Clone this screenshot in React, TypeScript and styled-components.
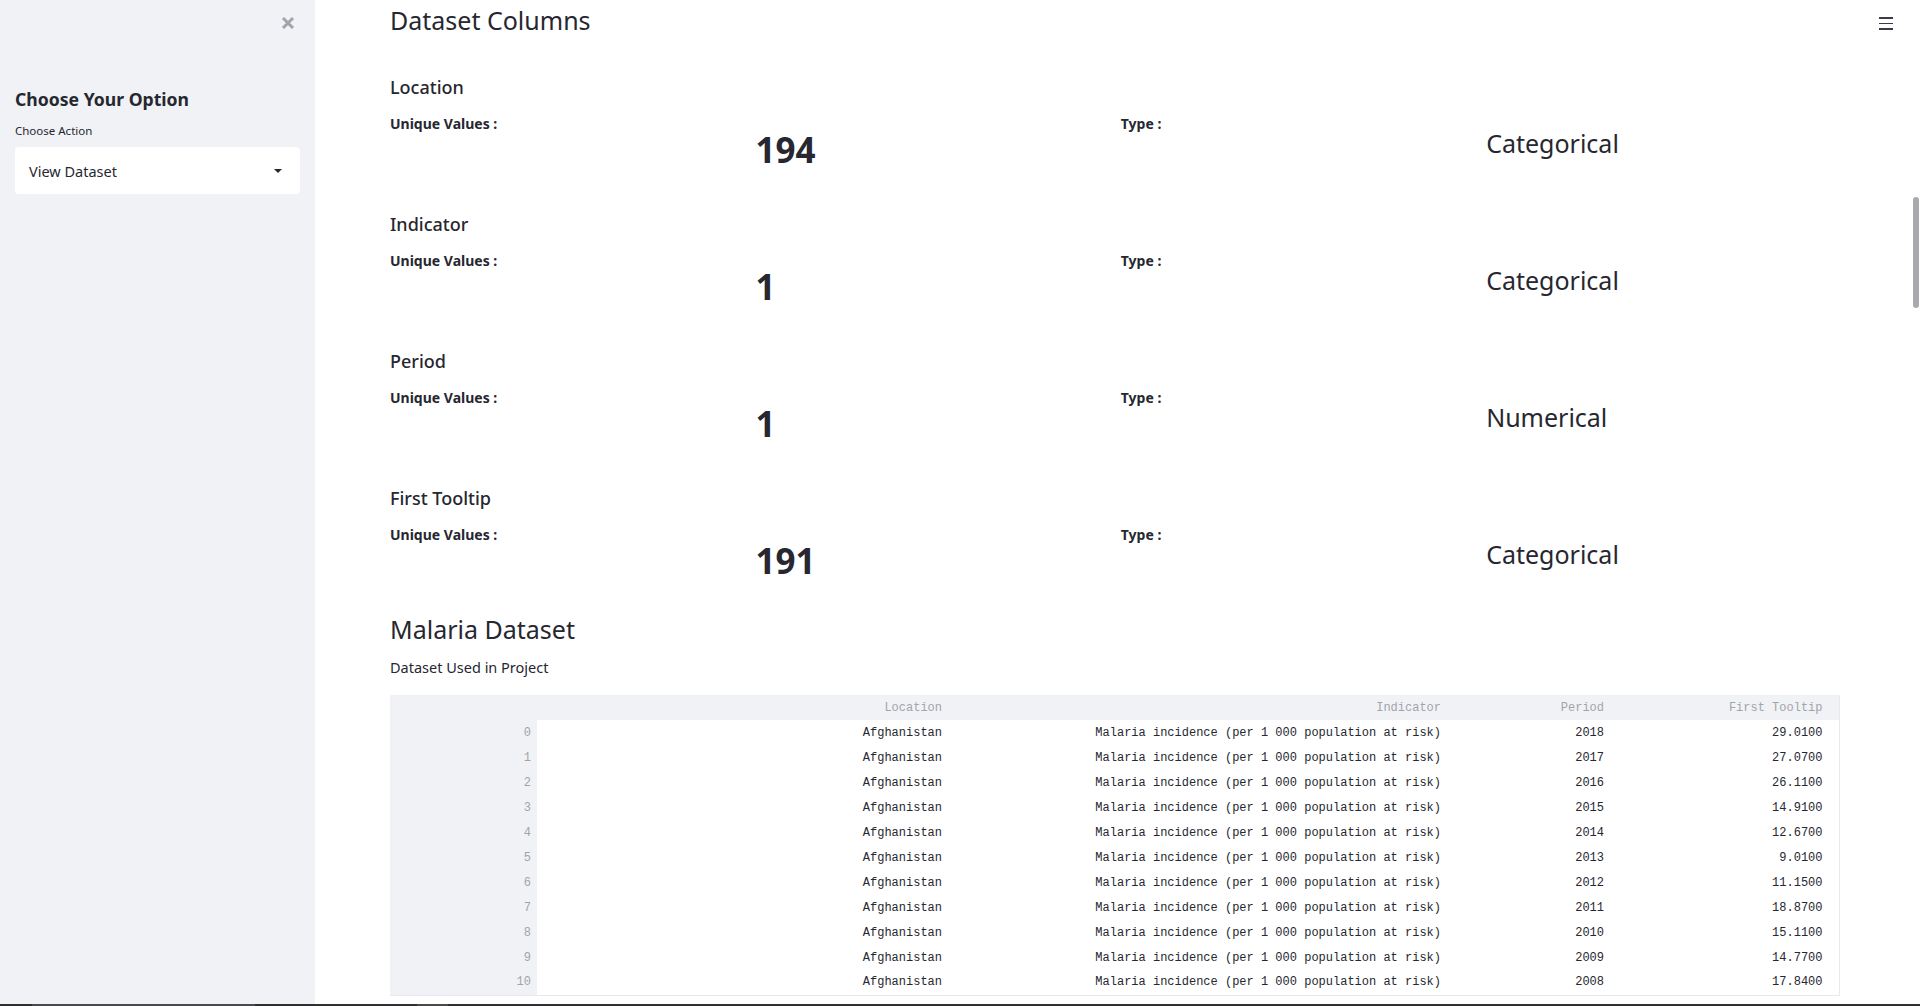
import React from "react";
import styled, { createGlobalStyle } from "styled-components";

const GlobalStyle = createGlobalStyle`
  html, body { margin: 0; padding: 0; background: #ffffff; }
  body { font-family: "Noto Sans", "Open Sans", sans-serif; color: #262730; overflow: hidden; }
  * { box-sizing: border-box; }
`;

const Shell = styled.div`
  display: flex;
  flex-direction: column;
  width: 1920px;
  height: 1006px;
  overflow: hidden;
`;

const Body = styled.div`
  display: flex;
  flex: 1;
  min-height: 0;
  position: relative;
`;

const Sidebar = styled.aside`
  width: 315px;
  flex-shrink: 0;
  background: #f0f2f6;
  display: flex;
  flex-direction: column;
  padding: 0 15px;
`;

const CloseRow = styled.div`
  display: flex;
  justify-content: flex-end;
  padding: 16px 5px 0 0;
  height: 87px;
`;

const SideTitle = styled.h2`
  margin: 0;
  font-size: 17.6px;
  font-weight: 700;
  line-height: 24px;
`;

const FieldLabel = styled.label`
  display: block;
  margin-top: 13px;
  font-size: 11.5px;
  line-height: 14px;
  color: #262730;
`;

const SelectBox = styled.div`
  margin-top: 9px;
  height: 47px;
  background: #ffffff;
  border-radius: 4px;
  display: flex;
  align-items: center;
  justify-content: space-between;
  padding: 0 18px 0 14px;
  font-size: 14.5px;
  color: #262730;
`;

const Caret = styled.span`
  width: 0;
  height: 0;
  border-left: 4px solid transparent;
  border-right: 4px solid transparent;
  border-top: 4px solid #262730;
`;

const Main = styled.main`
  flex: 1;
  padding: 0 81px 0 75px;
  display: flex;
  flex-direction: column;
`;

const PageTitle = styled.h2`
  margin: 2px 0 0 0;
  font-size: 25px;
  font-weight: 400;
  line-height: 36px;
`;

const Blocks = styled.div`
  margin-top: 37px;
  display: flex;
  flex-direction: column;
  gap: 41px;
`;

const Block = styled.section`
  display: flex;
  flex-direction: column;
`;

const ColName = styled.h3`
  margin: 0;
  font-size: 18px;
  font-weight: 500;
  line-height: 24px;
`;

const StatGrid = styled.div`
  margin-top: 15px;
  display: grid;
  grid-template-columns: repeat(4, 1fr);
  column-gap: 12px;
  height: 57px;
`;

const StatLabel = styled.div`
  font-size: 14px;
  font-weight: 700;
  line-height: 20px;
`;

const BigNumber = styled.div`
  padding-top: 14px;
  font-size: 35px;
  font-weight: 700;
  line-height: 44px;
`;

const TypeValue = styled.div`
  padding-top: 11px;
  font-size: 25px;
  font-weight: 400;
  line-height: 36px;
`;

const SectionTitle = styled.h2`
  margin: 29px 0 0 0;
  font-size: 25px;
  font-weight: 400;
  line-height: 36px;
`;

const Caption = styled.p`
  margin: 10px 0 0 0;
  font-size: 14.5px;
  line-height: 20px;
`;

const Table = styled.table`
  margin-top: 18px;
  width: 1449px;
  border-collapse: collapse;
  table-layout: fixed;
  font-family: "Liberation Mono", "DejaVu Sans Mono", monospace;
  font-size: 12px;
  border-bottom: 1px solid #e6e9ef;
  border-right: 1px solid #e6e9ef;
`;

const Col = styled.col<{ $w: number }>`
  width: ${(p) => p.$w}px;
`;

const HeadCell = styled.th<{ $last?: boolean }>`
  height: 25px;
  padding: 0 ${(p) => (p.$last ? "16px" : "6px")} 0 0;
  text-align: right;
  font-weight: 400;
  color: #a3a4aa;
  background: #f0f2f6;
  white-space: nowrap;
`;

const IndexCell = styled.th`
  height: 25px;
  padding: 0 6px 0 0;
  text-align: right;
  font-weight: 400;
  color: #a3a4aa;
  background: #f0f2f6;
`;

const Cell = styled.td<{ $last?: boolean }>`
  height: 25px;
  padding: 0 ${(p) => (p.$last ? "16px" : "6px")} 0 0;
  text-align: right;
  color: #262730;
  white-space: nowrap;
`;

const Hamburger = styled.button`
  position: absolute;
  top: 17px;
  right: 27px;
  width: 14px;
  height: 13px;
  padding: 0;
  border: none;
  background: transparent;
  display: flex;
  flex-direction: column;
  justify-content: space-between;
  & > span {
    display: block;
    height: 1.6px;
    background: #3a3b44;
  }
`;

const ScrollThumb = styled.div`
  position: absolute;
  right: 1px;
  top: 197px;
  width: 6px;
  height: 111px;
  border-radius: 3px;
  background: #a9a9ae;
`;

const BottomBar = styled.div`
  height: 2px;
  background: #2f2f31;
  display: flex;
`;

const BarSeg = styled.div<{ $w: number; $ml: number }>`
  margin-left: ${(p) => p.$ml}px;
  width: ${(p) => p.$w}px;
  background: #4a4a4e;
`;

const stats = [
  { name: "Location", unique: "194", type: "Categorical" },
  { name: "Indicator", unique: "1", type: "Categorical" },
  { name: "Period", unique: "1", type: "Numerical" },
  { name: "First Tooltip", unique: "191", type: "Categorical" },
];

const rows = [
  ["2018", "29.0100"],
  ["2017", "27.0700"],
  ["2016", "26.1100"],
  ["2015", "14.9100"],
  ["2014", "12.6700"],
  ["2013", "9.0100"],
  ["2012", "11.1500"],
  ["2011", "18.8700"],
  ["2010", "15.1100"],
  ["2009", "14.7700"],
  ["2008", "17.8400"],
];

const CloseIcon = () => (
  <svg width="14" height="14" viewBox="0 0 14 14" aria-label="close">
    <path d="M2 2 L12 12 M12 2 L2 12" stroke="#a3a4ab" strokeWidth="3" strokeLinecap="butt" />
  </svg>
);

export default function App() {
  return (
    <>
      <GlobalStyle />
      <Shell>
        <Body>
          <Sidebar>
            <CloseRow>
              <CloseIcon />
            </CloseRow>
            <SideTitle>Choose Your Option</SideTitle>
            <FieldLabel>Choose Action</FieldLabel>
            <SelectBox>
              <span>View Dataset</span>
              <Caret />
            </SelectBox>
          </Sidebar>
          <Main>
            <PageTitle>Dataset Columns</PageTitle>
            <Blocks>
              {stats.map((s) => (
                <Block key={s.name}>
                  <ColName>{s.name}</ColName>
                  <StatGrid>
                    <StatLabel>Unique Values :</StatLabel>
                    <BigNumber>{s.unique}</BigNumber>
                    <StatLabel>Type :</StatLabel>
                    <TypeValue>{s.type}</TypeValue>
                  </StatGrid>
                </Block>
              ))}
            </Blocks>
            <SectionTitle>Malaria Dataset</SectionTitle>
            <Caption>Dataset Used in Project</Caption>
            <Table>
              <colgroup>
                <Col $w={147} />
                <Col $w={411} />
                <Col $w={499} />
                <Col $w={163} />
                <Col $w={229} />
              </colgroup>
              <thead>
                <tr>
                  <IndexCell />
                  <HeadCell>Location</HeadCell>
                  <HeadCell>Indicator</HeadCell>
                  <HeadCell>Period</HeadCell>
                  <HeadCell $last>First Tooltip</HeadCell>
                </tr>
              </thead>
              <tbody>
                {rows.map((r, i) => (
                  <tr key={i}>
                    <IndexCell>{i}</IndexCell>
                    <Cell>Afghanistan</Cell>
                    <Cell>Malaria incidence (per 1 000 population at risk)</Cell>
                    <Cell>{r[0]}</Cell>
                    <Cell $last>{r[1]}</Cell>
                  </tr>
                ))}
              </tbody>
            </Table>
          </Main>
          <Hamburger aria-label="menu">
            <span />
            <span />
            <span />
          </Hamburger>
          <ScrollThumb />
        </Body>
        <BottomBar>
          <BarSeg $ml={32} $w={223} />
          <BarSeg $ml={162} $w={31} />
        </BottomBar>
      </Shell>
    </>
  );
}
